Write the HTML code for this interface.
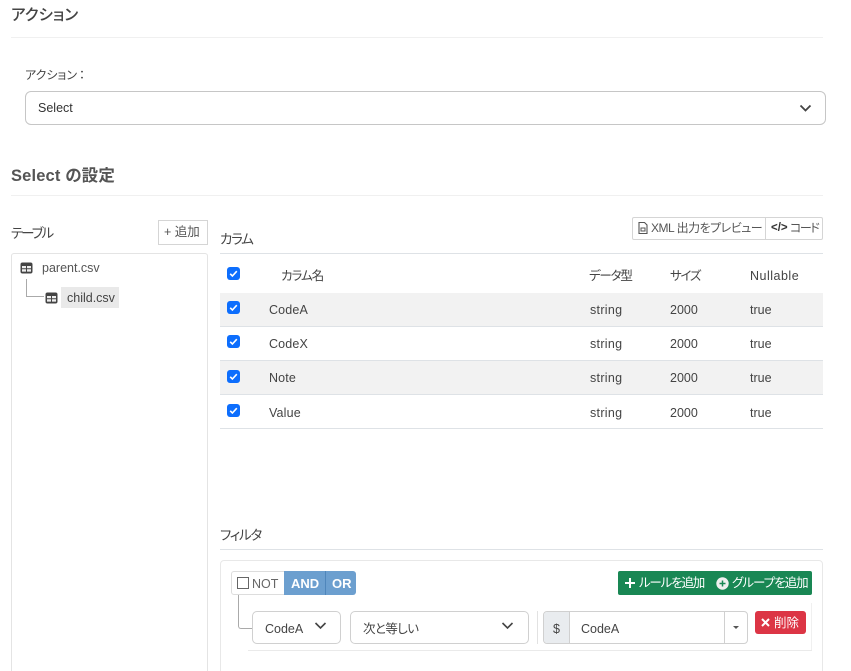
<!DOCTYPE html>
<html lang="ja"><head><meta charset="utf-8">
<style>
html,body{margin:0;padding:0;background:#fff}
#p{position:relative;width:851px;height:671px;overflow:hidden;background:#fff;font-family:"Liberation Sans","Noto Sans CJK JP",sans-serif;color:#444;font-size:12.5px;font-feature-settings:"palt"}
#p div,#p svg{position:absolute}
.t{white-space:nowrap;line-height:16px}
.line{height:1px;background:#dee2e6}
.box{box-sizing:border-box;border:1px solid #ccc;background:#fff}
</style></head><body><div id="p">

<div class="t" style="left:11px;top:8px;font-size:15.5px;font-weight:500;color:#444">アクション</div>
<div class="line" style="left:11px;top:37px;width:812px;background:#f0f0f0"></div>
<div class="t" style="left:25px;top:67px;font-size:12px;color:#444">アクション<span style="margin-left:2px">：</span></div>
<div class="box" style="left:25px;top:91px;width:801px;height:34px;border-radius:6px;border-color:#c6c6c6"></div>
<div class="t" style="left:38px;top:100px;font-size:12.5px;color:#333">Select</div>
<svg style="left:799px;top:104px" width="13" height="9" viewBox="0 0 13 9"><path d="M1.5 1.5L6.5 6.5L11.5 1.5" fill="none" stroke="#444" stroke-width="1.8"/></svg>

<div class="t" style="left:11px;top:168px;font-size:16.5px;font-weight:700;color:#555;letter-spacing:.15px">Select の設定</div>
<div class="line" style="left:11px;top:195px;width:812px;background:#f0f0f0"></div>

<div class="t" style="left:11px;top:226px;font-size:13.5px;color:#444;letter-spacing:-2px">テーブル</div>
<div class="box" style="left:158px;top:220px;width:50px;height:25px;border-color:#d5d5d5"></div>
<div class="t" style="left:164px;top:224px;font-size:12.5px;color:#555">+ 追加</div>
<div class="box" style="left:11px;top:253px;width:197px;height:430px;border-color:#e4e4e4;border-radius:3px"></div>

<svg style="left:20px;top:262px" width="13" height="12" viewBox="0 0 13 12"><rect x=".5" y=".5" width="12" height="11" rx="2" fill="#444"/><path d="M2 4h4v2.2H2zM7 4h4v2.2H7zM2 7.2h4v2.4H2zM7 7.2h4v2.4H7z" fill="#eee"/></svg>
<div class="t" style="left:42px;top:260px;font-size:12.5px;color:#555">parent.csv</div>
<div style="left:26px;top:279px;width:18px;height:18px;box-sizing:border-box;border-left:1px solid #aaa;border-bottom:1px solid #aaa"></div>
<svg style="left:45px;top:292px" width="13" height="12" viewBox="0 0 13 12"><rect x=".5" y=".5" width="12" height="11" rx="2" fill="#444"/><path d="M2 4h4v2.2H2zM7 4h4v2.2H7zM2 7.2h4v2.4H2zM7 7.2h4v2.4H7z" fill="#eee"/></svg>
<div style="left:61px;top:287px;width:58px;height:21px;background:#e9e9e9"></div>
<div class="t" style="left:67px;top:290px;font-size:12.5px;color:#444">child.csv</div>

<div class="t" style="left:220px;top:232px;font-size:13.5px;color:#444;letter-spacing:-1.3px">カラム</div>
<div class="line" style="left:220px;top:253px;width:603px"></div>

<div class="box" style="left:632px;top:217px;width:191px;height:23px;border-color:#d5d5d5;border-radius:2px"></div>
<div style="left:765px;top:217px;width:1px;height:23px;background:#d5d5d5"></div>
<svg style="left:638px;top:221px" width="10" height="14" viewBox="0 0 10 14"><path d="M1 1.5h5.5L9 4v8.5H1z" fill="none" stroke="#555" stroke-width="1.1"/><rect x="3" y="7" width="4" height="3" fill="none" stroke="#555"/></svg>
<div class="t" style="left:651px;top:220px;font-size:12px;color:#555;letter-spacing:-.5px">XML 出力をプレビュー</div>
<div class="t" style="left:771px;top:220px;font-size:11.5px;color:#333;font-weight:700">&lt;/&gt;</div>
<div class="t" style="left:790px;top:220px;font-size:12px;color:#555;letter-spacing:-1.5px">コード</div>

<div style="left:220px;top:293px;width:603px;height:33px;background:#f2f2f2"></div>
<div style="left:220px;top:361px;width:603px;height:33px;background:#f2f2f2"></div>
<div class="line" style="left:220px;top:326px;width:603px"></div>
<div class="line" style="left:220px;top:360px;width:603px"></div>
<div class="line" style="left:220px;top:394px;width:603px"></div>
<div class="line" style="left:220px;top:428px;width:603px"></div>

<svg style="left:227px;top:267px" width="13" height="13" viewBox="0 0 13 13"><rect width="13" height="13" rx="3" fill="#0d6efd"/><path d="M3.2 6.8L5.4 9L9.8 4.2" fill="none" stroke="#fff" stroke-width="1.6"/></svg>
<svg style="left:227px;top:301px" width="13" height="13" viewBox="0 0 13 13"><rect width="13" height="13" rx="3" fill="#0d6efd"/><path d="M3.2 6.8L5.4 9L9.8 4.2" fill="none" stroke="#fff" stroke-width="1.6"/></svg>
<svg style="left:227px;top:335px" width="13" height="13" viewBox="0 0 13 13"><rect width="13" height="13" rx="3" fill="#0d6efd"/><path d="M3.2 6.8L5.4 9L9.8 4.2" fill="none" stroke="#fff" stroke-width="1.6"/></svg>
<svg style="left:227px;top:370px" width="13" height="13" viewBox="0 0 13 13"><rect width="13" height="13" rx="3" fill="#0d6efd"/><path d="M3.2 6.8L5.4 9L9.8 4.2" fill="none" stroke="#fff" stroke-width="1.6"/></svg>
<svg style="left:227px;top:404px" width="13" height="13" viewBox="0 0 13 13"><rect width="13" height="13" rx="3" fill="#0d6efd"/><path d="M3.2 6.8L5.4 9L9.8 4.2" fill="none" stroke="#fff" stroke-width="1.6"/></svg>

<div class="t" style="left:281px;top:268px;font-size:12.5px;color:#444;letter-spacing:-1px">カラム名</div>
<div class="t" style="left:589px;top:268px;font-size:12.5px;color:#444;letter-spacing:-1.2px">データ型</div>
<div class="t" style="left:670px;top:268px;font-size:12.5px;color:#444;letter-spacing:-1.3px">サイズ</div>
<div class="t" style="left:750px;top:268px;font-size:12.5px;color:#444;letter-spacing:.5px">Nullable</div>

<div class="t" style="left:269px;top:302px;letter-spacing:.15px">CodeA</div><div class="t" style="left:590px;top:302px;letter-spacing:.3px">string</div><div class="t" style="left:670px;top:302px">2000</div><div class="t" style="left:750px;top:302px">true</div>
<div class="t" style="left:269px;top:336px;letter-spacing:.15px">CodeX</div><div class="t" style="left:590px;top:336px;letter-spacing:.3px">string</div><div class="t" style="left:670px;top:336px">2000</div><div class="t" style="left:750px;top:336px">true</div>
<div class="t" style="left:269px;top:370px;letter-spacing:.15px">Note</div><div class="t" style="left:590px;top:370px;letter-spacing:.3px">string</div><div class="t" style="left:670px;top:370px">2000</div><div class="t" style="left:750px;top:370px">true</div>
<div class="t" style="left:269px;top:405px;letter-spacing:.15px">Value</div><div class="t" style="left:590px;top:405px;letter-spacing:.3px">string</div><div class="t" style="left:670px;top:405px">2000</div><div class="t" style="left:750px;top:405px">true</div>

<div class="t" style="left:220px;top:528px;font-size:13.5px;color:#444;letter-spacing:-1.2px">フィルタ</div>
<div class="line" style="left:220px;top:549px;width:603px"></div>
<div class="box" style="left:220px;top:560px;width:603px;height:130px;border-color:#e8e8e8;border-radius:4px"></div>

<div class="box" style="left:231px;top:571px;width:54px;height:24px;border-color:#ddd;border-radius:3px 0 0 3px"></div>
<div style="left:237px;top:577px;width:12px;height:12px;box-sizing:border-box;border:1.5px solid #666"></div>
<div class="t" style="left:252px;top:576px;font-size:12.5px;color:#666">NOT</div>
<div style="left:284px;top:571px;width:41px;height:24px;background:#6c9fcf"></div>
<div style="left:325px;top:571px;width:31px;height:24px;background:#6c9fcf;border-left:1px solid #4f86bb;box-sizing:border-box;border-radius:0 3px 3px 0"></div>
<div class="t" style="left:291px;top:576px;font-size:13px;color:#fff;font-weight:700">AND</div>
<div class="t" style="left:332px;top:576px;font-size:13px;color:#fff;font-weight:700">OR</div>

<div style="left:618px;top:571px;width:194px;height:24px;background:#198754;border-radius:2px"></div>
<svg style="left:624px;top:577px" width="12" height="12" viewBox="0 0 12 12"><path d="M6 1v10M1 6h10" stroke="#fff" stroke-width="2"/></svg>
<div class="t" style="left:639px;top:575px;font-size:12.5px;color:#fff;letter-spacing:-1.2px">ルールを追加</div>
<svg style="left:716px;top:577px" width="13" height="13" viewBox="0 0 13 13"><circle cx="6.5" cy="6.5" r="6.2" fill="#f0f0f0"/><path d="M6.5 3.5v6M3.5 6.5h6" stroke="#198754" stroke-width="1.5"/></svg>
<div class="t" style="left:732px;top:575px;font-size:12.5px;color:#fff;letter-spacing:-1px">グループを追加</div>

<div style="left:238px;top:595px;width:14px;height:34px;box-sizing:border-box;border-left:1.5px solid #aaa;border-bottom:1.5px solid #aaa;border-radius:0 0 0 3px"></div>
<div style="left:248px;top:650px;width:564px;height:1px;background:#eaeaea"></div>
<div style="left:811px;top:603px;width:1px;height:47px;background:#f0f0f0"></div>

<div class="box" style="left:252px;top:611px;width:89px;height:33px;border-color:#d0d0d0;border-radius:5px"></div>
<div class="t" style="left:265px;top:621px;font-size:12.5px;color:#444">CodeA</div>
<svg style="left:314px;top:622px" width="13" height="8" viewBox="0 0 13 8"><path d="M1.5 1L6.5 6L11.5 1" fill="none" stroke="#444" stroke-width="1.6"/></svg>

<div class="box" style="left:350px;top:611px;width:179px;height:33px;border-color:#d0d0d0;border-radius:5px"></div>
<div class="t" style="left:363px;top:621px;font-size:12.5px;color:#444;letter-spacing:-.6px">次と等しい</div>
<svg style="left:501px;top:622px" width="13" height="8" viewBox="0 0 13 8"><path d="M1.5 1L6.5 6L11.5 1" fill="none" stroke="#444" stroke-width="1.6"/></svg>

<div style="left:537px;top:611px;width:1px;height:33px;background:#e2e2e2"></div>
<div class="box" style="left:543px;top:611px;width:205px;height:33px;border-color:#d0d0d0;border-radius:4px"></div>
<div style="left:544px;top:612px;width:25px;height:31px;background:#e9ecef;border-right:1px solid #d0d0d0;border-radius:3px 0 0 3px"></div>
<div class="t" style="left:553px;top:621px;font-size:12.5px;color:#444">$</div>
<div class="t" style="left:581px;top:621px;font-size:12.5px;color:#444">CodeA</div>
<div style="left:724px;top:612px;width:1px;height:31px;background:#d0d0d0"></div>
<svg style="left:733px;top:626px" width="6" height="4" viewBox="0 0 6 4"><path d="M0 0h6L3 3z" fill="#555"/></svg>

<div style="left:755px;top:611px;width:51px;height:23px;background:#dc3545;border-radius:3px"></div>
<svg style="left:761px;top:618px" width="9" height="9" viewBox="0 0 9 9"><path d="M1 1l7 7M8 1l-7 7" stroke="#fff" stroke-width="2"/></svg>
<div class="t" style="left:774px;top:615px;font-size:12.5px;color:#fff">削除</div>

</div></body></html>
